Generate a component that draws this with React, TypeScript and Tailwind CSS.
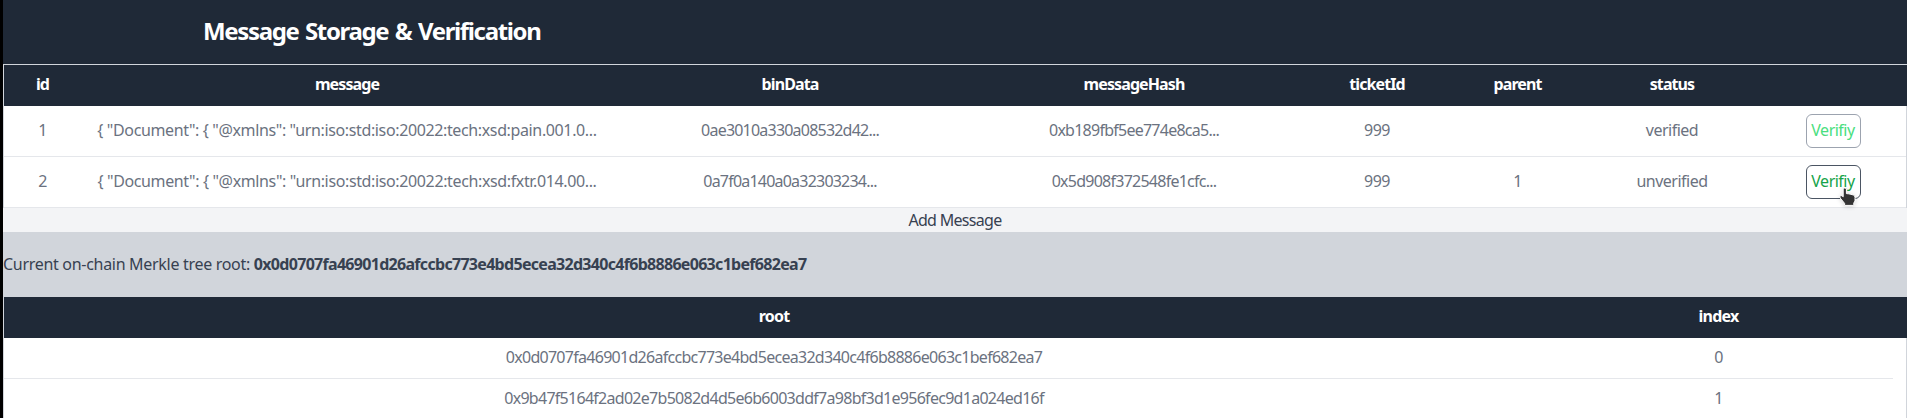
type Message = {
  id: number;
  message: string;
  binData: string;
  messageHash: string;
  ticketId: number;
  parent: string;
  status: string;
  hovered: boolean;
};

const messages: Message[] = [
  {
    id: 1,
    message: '{ "Document": { "@xmlns": "urn:iso:std:iso:20022:tech:xsd:pain.001.0...',
    binData: "0ae3010a330a08532d42...",
    messageHash: "0xb189fbf5ee774e8ca5...",
    ticketId: 999,
    parent: "",
    status: "verified",
    hovered: false,
  },
  {
    id: 2,
    message: '{ "Document": { "@xmlns": "urn:iso:std:iso:20022:tech:xsd:fxtr.014.00...',
    binData: "0a7f0a140a0a32303234...",
    messageHash: "0x5d908f372548fe1cfc...",
    ticketId: 999,
    parent: "1",
    status: "unverified",
    hovered: true,
  },
];

const roots = [
  { root: "0x0d0707fa46901d26afccbc773e4bd5ecea32d340c4f6b8886e063c1bef682ea7", index: 0 },
  { root: "0x9b47f5164f2ad02e7b5082d4d5e6b6003ddf7a98bf3d1e956fec9d1a024ed16f", index: 1 },
];

const messageColumns =
  "grid grid-cols-[77px_532px_354px_334px_152px_129px_180px_142px] items-center text-center whitespace-nowrap";
const rootColumns = "grid w-[1889px] grid-cols-[1540px_349px] items-center text-center whitespace-nowrap";

function HandCursor() {
  return (
    <svg className="absolute left-[32px] top-[21px] drop-shadow-sm" width="18" height="20" viewBox="0 0 18 20">
      <path
        d="M4.2 2 C4.2 .7 7.4 .7 7.4 2 V6.6 L9.5 6.8 L12 7.3 L14.3 8 Q16 8.6 16 10.2 V14 L14.8 16 V18.4 H5.6 V16.4 L1.2 11 C.2 9.3 1.6 7.9 3 8.8 L4.2 9.8 Z"
        fill="#333"
        stroke="#fff"
        strokeWidth="1"
      />
    </svg>
  );
}

export default function App() {
  return (
    <div className="h-[418px] overflow-hidden bg-black pl-[3px] font-['Noto_Sans',sans-serif] text-base tracking-[-0.5px]">
      <header className="flex h-16 items-center bg-[#1f2937] pb-0.5 pl-[200px] text-2xl font-bold tracking-[-1.35px] text-white [word-spacing:1.6px]">
        <h1>Message Storage &amp; Verification</h1>
      </header>

      <section className="h-36 border-x border-t border-[#d1d5db] bg-white text-[#6b7280]">
        <div
          className={`${messageColumns} -mr-px h-[41px] bg-[#1f2937] pb-[3px] font-bold tracking-[-0.9px] text-white`}
        >
          <span>id</span>
          <span>message</span>
          <span>binData</span>
          <span>messageHash</span>
          <span>ticketId</span>
          <span>parent</span>
          <span>status</span>
          <span />
        </div>
        {messages.map((m) => (
          <div key={m.id} className={`${messageColumns} h-[51px] border-b border-[#e5e7eb]`}>
            <span className="pb-[3px]">{m.id}</span>
            <span className="pb-[3px] tracking-[-0.37px]">{m.message}</span>
            <span className="pb-[3px] tracking-[-0.79px]">{m.binData}</span>
            <span className="pb-[3px] tracking-[-0.75px]">{m.messageHash}</span>
            <span className="pb-[3px]">{m.ticketId}</span>
            <span className="pb-[3px]">{m.parent}</span>
            <span className="pb-[3px]">{m.status}</span>
            <span className="flex justify-center">
              <button
                className={
                  m.hovered
                    ? "relative h-[34px] w-[55px] rounded-md border border-[#4b5563] pb-[3px] text-[#16a34a]"
                    : "relative h-[34px] w-[55px] rounded-md border border-[#9ca3af] pb-[3px] text-[#4ade80]"
                }
              >
                Verifiy
                {m.hovered && <HandCursor />}
              </button>
            </span>
          </div>
        ))}
      </section>

      <button className="block h-6 w-full bg-[#f3f4f6] pb-px tracking-[-0.7px] text-[#374151]">Add Message</button>

      <div className="flex h-[65px] items-center bg-[#d1d5db] pb-[2px] tracking-[-0.3px] text-[#374151]">
        <p>
          Current on-chain Merkle tree root:{" "}
          <b className="font-bold tracking-[-0.7px]">{roots[0].root}</b>
        </p>
      </div>

      <section className="h-[121px] border-x border-[#d1d5db] bg-white text-[#6b7280]">
        <div className="-mr-px bg-[#1f2937]">
          <div className={`${rootColumns} h-[41px] pb-[3px] font-bold tracking-[-0.8px] text-white`}>
            <span>root</span>
            <span>index</span>
          </div>
        </div>
        {roots.map((r) => (
          <div key={r.index} className={`${rootColumns} h-[41px] border-b border-[#e5e7eb] pb-[2px]`}>
            <span className="tracking-[-0.72px]">{r.root}</span>
            <span>{r.index}</span>
          </div>
        ))}
      </section>
    </div>
  );
}
